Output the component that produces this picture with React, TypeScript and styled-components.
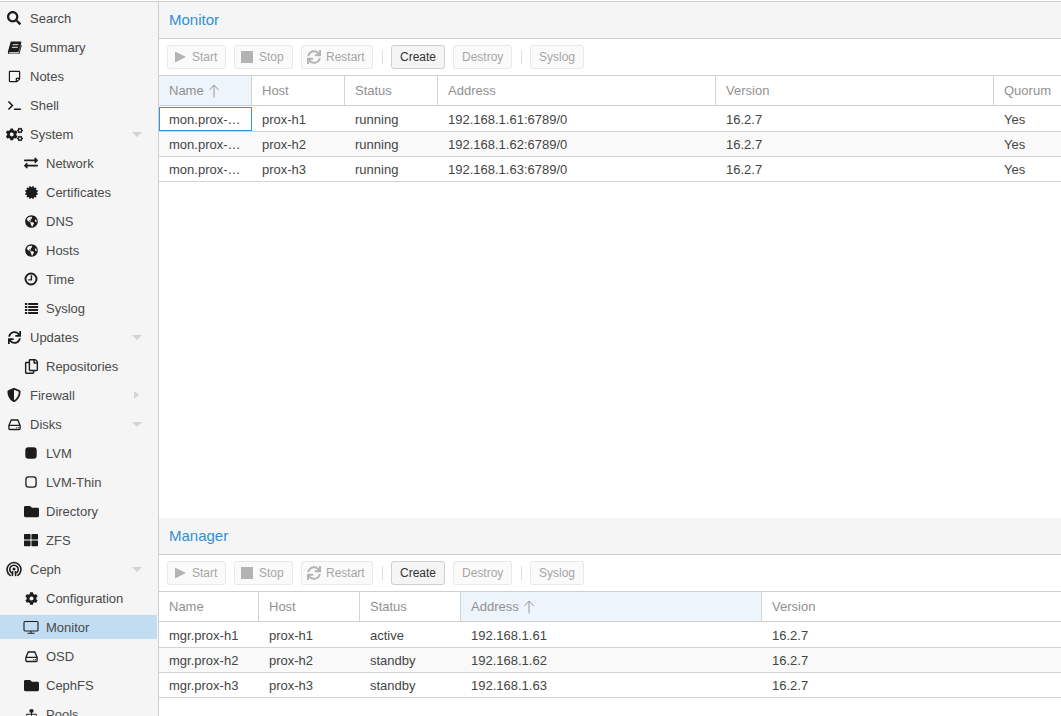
import React from "react";
import styled, { createGlobalStyle } from "styled-components";
import {
  FaCertificate,
  FaCog,
  FaCogs,
  FaExchangeAlt,
  FaFolder,
  FaGlobeAmericas,
  FaRegCopy,
  FaRegStickyNote,
  FaSearch,
  FaShieldAlt,
  FaSitemap,
  FaSync,
  FaTerminal,
  FaThLarge,
} from "react-icons/fa";

const GlobalStyle = createGlobalStyle`
  html, body {
    margin: 0;
    height: 100%;
    overflow: hidden;
    background: #fff;
    font-family: "Liberation Sans", Arial, sans-serif;
    font-size: 13px;
    color: #444;
  }
`;

const Page = styled.div`
  height: 716px;
  display: flex;
  overflow: hidden;
  box-sizing: border-box;
  padding-top: 1px;
`;

const Sidebar = styled.nav`
  width: 159px;
  flex: none;
  box-sizing: border-box;
  background: #f5f5f5;
  border-top: 1px solid #cfcfcf;
  border-right: 1px solid #cfcfcf;
  padding-top: 4px;
  display: flex;
  flex-direction: column;
  gap: 5px;
  overflow: hidden;
`;

const NavRow = styled.div<{ $child?: boolean; $selected?: boolean }>`
  height: 24px;
  flex: none;
  display: flex;
  align-items: center;
  gap: ${(p) => (p.$child ? "5px" : "6px")};
  position: relative;
  margin-right: 1px;
  padding-left: ${(p) => (p.$child ? "21px" : "4px")};
  background: ${(p) => (p.$selected ? "#c2ddf2" : "transparent")};
  color: #4a4a4a;
`;

const NavIcon = styled.span`
  width: 20px;
  height: 16px;
  flex: none;
  display: flex;
  align-items: center;
  justify-content: center;
  color: #1c1c1c;
  font-size: 13px;
`;

const Chevron = styled.span<{ $right?: boolean }>`
  position: absolute;
  right: ${(p) => (p.$right ? "18px" : "15px")};
  top: ${(p) => (p.$right ? "8px" : "10px")};
  width: 0;
  height: 0;
  ${(p) =>
    p.$right
      ? `border-top: 4.5px solid transparent;
         border-bottom: 4.5px solid transparent;
         border-left: 5px solid #d4d4d4;`
      : `border-left: 5px solid transparent;
         border-right: 5px solid transparent;
         border-top: 5px solid #d4d4d4;`}
`;

const Content = styled.main`
  flex: 1;
  min-width: 0;
  display: flex;
  flex-direction: column;
`;

const Panel = styled.section<{ $fill?: boolean; $top?: boolean }>`
  display: flex;
  flex-direction: column;
  flex: ${(p) => (p.$fill ? "1" : "none")};
  height: ${(p) => (p.$fill ? "auto" : "198px")};
  border-top: ${(p) => (p.$top ? "1px solid #cfcfcf" : "none")};
`;

const TitleBar = styled.header`
  height: 36px;
  flex: none;
  box-sizing: border-box;
  display: flex;
  align-items: center;
  padding: 0 0 2px 10px;
  background: #f5f5f5;
  color: #2f8fd8;
  font-size: 15px;
`;

const Toolbar = styled.div`
  height: 38px;
  flex: none;
  box-sizing: border-box;
  display: flex;
  align-items: center;
  gap: 8px;
  padding-left: 8px;
  border-top: 1px solid #cfcfcf;
  border-bottom: 1px solid #cfcfcf;
`;

const ToolButton = styled.button<{ $enabled?: boolean; $icon?: boolean; $width: number }>`
  width: ${(p) => p.$width}px;
  height: 24px;
  flex: none;
  box-sizing: border-box;
  display: flex;
  align-items: center;
  gap: 5px;
  padding: 0 0 0 ${(p) => (p.$icon ? "5px" : "8px")};
  margin: 0;
  border-radius: 3px;
  font: inherit;
  font-size: 12px;
  white-space: nowrap;
  border: 1px solid ${(p) => (p.$enabled ? "#cfcfcf" : "#e8e8e8")};
  background: ${(p) => (p.$enabled ? "#f5f5f5" : "#fafafa")};
  color: ${(p) => (p.$enabled ? "#333" : "#a6a6a6")};
  svg {
    color: #b3b3b3;
  }
`;

const Separator = styled.span`
  width: 1px;
  height: 14px;
  margin-left: 1px;
  background: #dedede;
`;

const Grid = styled.div`
  flex: 1;
  min-height: 0;
`;

const HeaderRow = styled.div<{ $columns: string }>`
  display: grid;
  grid-template-columns: ${(p) => p.$columns};
  height: 30px;
  box-sizing: border-box;
  border-bottom: 1px solid #cfcfcf;
`;

const HeaderCell = styled.div<{ $sorted?: boolean; $last?: boolean }>`
  display: flex;
  align-items: center;
  gap: 4px;
  padding-left: 10px;
  min-width: 0;
  box-sizing: border-box;
  background: ${(p) => (p.$sorted ? "#edf4fb" : "#fff")};
  border-right: ${(p) => (p.$last ? "none" : "1px solid #d4d4d4")};
  color: #919191;
`;

const DataRow = styled.div<{ $columns: string; $striped?: boolean; $first?: boolean }>`
  display: grid;
  grid-template-columns: ${(p) => p.$columns};
  height: ${(p) => (p.$first ? "26px" : "25px")};
  padding-top: ${(p) => (p.$first ? "1px" : "0")};
  box-sizing: border-box;
  border-bottom: 1px solid #d4d4d4;
  background: ${(p) => (p.$striped ? "#f9f9f9" : "#fff")};
`;

const DataCell = styled.div<{ $focused?: boolean }>`
  display: flex;
  align-items: center;
  min-width: 0;
  padding: ${(p) => (p.$focused ? "0 10px 0 9px" : "0 11px 0 10px")};
  box-sizing: border-box;
  color: #444;
  border: ${(p) => (p.$focused ? "1px solid #3892d4" : "none")};
`;

const CellText = styled.span`
  display: block;
  min-width: 0;
  white-space: nowrap;
  overflow: hidden;
  text-overflow: ellipsis;
`;

const CephIcon = () => (
  <svg width="16" height="16" viewBox="0 0 17 17" fill="none" stroke="#1c1c1c" strokeWidth="1.7" strokeLinecap="round">
    <path d="M4.4 15.2A7.4 7.4 0 1 1 12.6 15.2" />
    <path d="M5.6 12.4A4.5 4.5 0 1 1 11.4 12.4" />
    <circle cx="8.5" cy="8.6" r="1.6" fill="#1c1c1c" stroke="none" />
    <path d="M7 11.4L6.8 15.4M10 11.4L10.2 15.4" />
  </svg>
);

const BookIcon = () => (
  <svg width="15" height="15" viewBox="0 0 16 16">
    <path
      fill="#1c1c1c"
      d="M5 1.5h9.6c.6 0 .9.5.7 1.1l-2.7 9.5c-.2.6-.6 1-1.3 1H3.2c-.9 0-1.2.7-.9 1 .2.2.5.3.9.3h9.1l2.6-9.4.9.5-2.6 9.5H3.2C1.5 15 .6 13.8 1 12.2L3.6 2.8C3.8 2 4.3 1.5 5 1.5z"
    />
    <path stroke="#f5f5f5" strokeWidth="1" d="M6 5h6.2M5.3 7.8h6.2" />
  </svg>
);

const HddIcon = () => (
  <svg width="15" height="15" viewBox="0 0 16 16" fill="none" stroke="#1c1c1c" strokeWidth="1.4">
    <path d="M2 9L4.5 3.2h7L14 9v3.3a1 1 0 0 1-1 1H3a1 1 0 0 1-1-1zM2 9h12" />
    <path d="M10 11.3h.9M12 11.3h.9" />
  </svg>
);

const ListIcon = () => (
  <svg width="15" height="15" viewBox="0 0 16 16" fill="#1c1c1c">
    <path d="M1 2h2.5v2.3H1zM4.5 2H15v2.3H4.5zM1 5.2h2.5v2.3H1zM4.5 5.2H15v2.3H4.5zM1 8.4h2.5v2.3H1zM4.5 8.4H15v2.3H4.5zM1 11.6h2.5v2.3H1zM4.5 11.6H15v2.3H4.5z" />
  </svg>
);

const ClockIcon = () => (
  <svg width="14" height="14" viewBox="0 0 16 16" fill="none" stroke="#1c1c1c">
    <circle cx="8" cy="8" r="6.3" strokeWidth="2.2" />
    <path d="M8.5 3.8V9H4.8" strokeWidth="1.6" />
  </svg>
);

const SolidSquareIcon = () => (
  <svg width="14" height="14" viewBox="0 0 16 16">
    <rect x="1.5" y="1.5" width="13" height="13" rx="3.5" fill="#1c1c1c" />
  </svg>
);

const OutlineSquareIcon = () => (
  <svg width="14" height="14" viewBox="0 0 16 16">
    <rect x="2.2" y="2.2" width="11.6" height="11.6" rx="3" fill="none" stroke="#1c1c1c" strokeWidth="1.5" />
  </svg>
);

const DesktopIcon = () => (
  <svg width="16" height="16" viewBox="0 0 16 16" fill="none" stroke="#1c1c1c" strokeWidth="1.1">
    <rect x="1" y="2.5" width="14" height="9.5" rx="1" />
    <path d="M8 12v2M4.5 14.3h7" />
  </svg>
);

const PlayGlyph = () => (
  <svg width="14" height="14" viewBox="0 0 14 14">
    <path fill="currentColor" d="M2 1.5L13 7L2 12.5z" />
  </svg>
);

const StopGlyph = () => (
  <svg width="14" height="14" viewBox="0 0 14 14">
    <rect fill="currentColor" x="1" y="1" width="12" height="12" />
  </svg>
);

type NavItem = {
  label: string;
  icon: React.ReactNode;
  child?: boolean;
  selected?: boolean;
  chevron?: "down" | "right";
};

const navItems: NavItem[] = [
  { label: "Search", icon: <FaSearch size={14} /> },
  { label: "Summary", icon: <BookIcon /> },
  { label: "Notes", icon: <FaRegStickyNote /> },
  { label: "Shell", icon: <FaTerminal /> },
  { label: "System", icon: <FaCogs size={17} />, chevron: "down" },
  { label: "Network", icon: <FaExchangeAlt size={14} />, child: true },
  { label: "Certificates", icon: <FaCertificate />, child: true },
  { label: "DNS", icon: <FaGlobeAmericas />, child: true },
  { label: "Hosts", icon: <FaGlobeAmericas />, child: true },
  { label: "Time", icon: <ClockIcon />, child: true },
  { label: "Syslog", icon: <ListIcon />, child: true },
  { label: "Updates", icon: <FaSync />, chevron: "down" },
  { label: "Repositories", icon: <FaRegCopy size={15} />, child: true },
  { label: "Firewall", icon: <FaShieldAlt size={14} />, chevron: "right" },
  { label: "Disks", icon: <HddIcon />, chevron: "down" },
  { label: "LVM", icon: <SolidSquareIcon />, child: true },
  { label: "LVM-Thin", icon: <OutlineSquareIcon />, child: true },
  { label: "Directory", icon: <FaFolder size={15} />, child: true },
  { label: "ZFS", icon: <FaThLarge size={14} />, child: true },
  { label: "Ceph", icon: <CephIcon />, chevron: "down" },
  { label: "Configuration", icon: <FaCog />, child: true },
  { label: "Monitor", icon: <DesktopIcon />, child: true, selected: true },
  { label: "OSD", icon: <HddIcon />, child: true },
  { label: "CephFS", icon: <FaFolder size={15} />, child: true },
  { label: "Pools", icon: <FaSitemap />, child: true },
];

const SortArrow = () => (
  <svg width="12" height="14" viewBox="0 0 12 14" fill="none" stroke="#9a9a9a" strokeWidth="1">
    <path d="M6 13.5V1M1.5 6L6 1L10.5 6" />
  </svg>
);

const Actions = () => (
  <Toolbar>
    <ToolButton $icon $width={59}><PlayGlyph />Start</ToolButton>
    <ToolButton $icon $width={59}><StopGlyph />Stop</ToolButton>
    <ToolButton $icon $width={72}><FaSync size={14} />Restart</ToolButton>
    <Separator />
    <ToolButton $enabled $width={54}>Create</ToolButton>
    <ToolButton $width={59}>Destroy</ToolButton>
    <Separator />
    <ToolButton $width={54}>Syslog</ToolButton>
  </Toolbar>
);

type TableProps = {
  title: string;
  columns: string;
  headers: string[];
  sorted: number;
  rows: string[][];
  focusFirst?: boolean;
  fill?: boolean;
};

const TablePanel = ({ title, columns, headers, sorted, rows, focusFirst, fill }: TableProps) => (
  <Panel $fill={fill} $top={fill}>
    <TitleBar>{title}</TitleBar>
    <Actions />
    <Grid>
      <HeaderRow $columns={columns}>
        {headers.map((h, i) => (
          <HeaderCell key={h} $sorted={i === sorted} $last={i === headers.length - 1}>
            {h}
            {i === sorted && <SortArrow />}
          </HeaderCell>
        ))}
      </HeaderRow>
      {rows.map((row, r) => (
        <DataRow key={row[0]} $columns={columns} $striped={r === 1} $first={r === 0}>
          {row.map((value, c) => (
            <DataCell key={c} $focused={focusFirst && r === 0 && c === 0}>
              <CellText>{value}</CellText>
            </DataCell>
          ))}
        </DataRow>
      ))}
    </Grid>
  </Panel>
);

const monitorRows = ["1", "2", "3"].map((n) => [
  `mon.prox-h${n}`,
  `prox-h${n}`,
  "running",
  `192.168.1.6${n}:6789/0`,
  "16.2.7",
  "Yes",
]);

const managerRows = ["1", "2", "3"].map((n) => [
  `mgr.prox-h${n}`,
  `prox-h${n}`,
  n === "1" ? "active" : "standby",
  `192.168.1.6${n}`,
  "16.2.7",
]);

export default function App() {
  return (
    <Page>
      <GlobalStyle />
      <Sidebar>
        {navItems.map((item) => (
          <NavRow key={item.label} $child={item.child} $selected={item.selected}>
            <NavIcon>{item.icon}</NavIcon>
            {item.label}
            {item.chevron && <Chevron $right={item.chevron === "right"} />}
          </NavRow>
        ))}
      </Sidebar>
      <Content>
        <TablePanel
          fill
          focusFirst
          title="Monitor"
          columns="93px 93px 93px 278px 278px 1fr"
          headers={["Name", "Host", "Status", "Address", "Version", "Quorum"]}
          sorted={0}
          rows={monitorRows}
        />
        <TablePanel
          title="Manager"
          columns="100px 101px 101px 301px 1fr"
          headers={["Name", "Host", "Status", "Address", "Version"]}
          sorted={3}
          rows={managerRows}
        />
      </Content>
    </Page>
  );
}
